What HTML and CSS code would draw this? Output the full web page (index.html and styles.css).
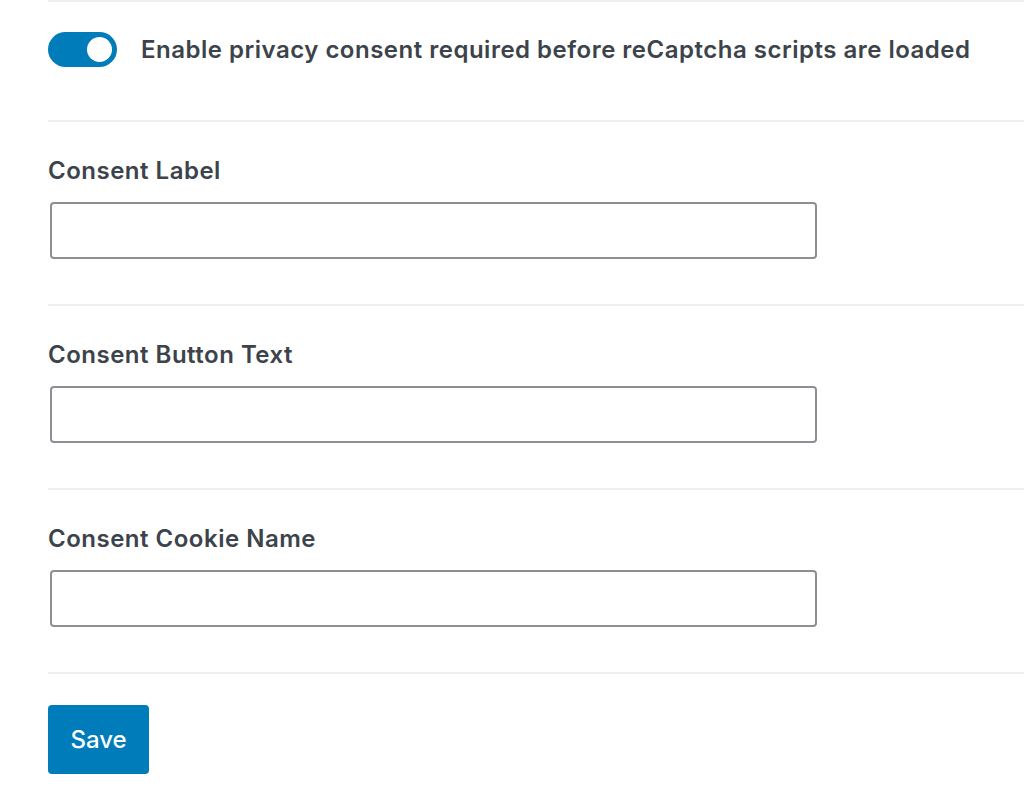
FILE: index.html
```html
<!DOCTYPE html>
<html>
<head>
<meta charset="utf-8">
<link rel="stylesheet" href="styles.css">
</head>
<body>
<div class="settings">
  <div class="row toggle-row">
    <span class="toggle"><span class="knob"></span></span>
    <span class="toggle-label">Enable privacy consent required before reCaptcha scripts are loaded</span>
  </div>
  <div class="row field-row">
    <label class="field-label">Consent Label</label>
    <input class="field-input" type="text">
  </div>
  <div class="row field-row">
    <label class="field-label">Consent Button Text</label>
    <input class="field-input" type="text">
  </div>
  <div class="row field-row">
    <label class="field-label">Consent Cookie Name</label>
    <input class="field-input" type="text">
  </div>
  <div class="row actions">
    <button class="save-btn">Save</button>
  </div>
</div>
</body>
</html>
```

FILE: styles.css
```css
html, body {
  margin: 0;
  padding: 0;
  background: #ffffff;
}
body {
  font-family: Inter, "Liberation Sans", Arial, sans-serif;
  color: #3c434a;
}
.settings {
  margin-left: 48px;
}
.row {
  border-top: 2px solid #f0f0f1;
}
.toggle-row {
  display: flex;
  align-items: center;
  gap: 24px;
  padding: 30px 0 53px;
}
.toggle {
  width: 69px;
  height: 35px;
  border-radius: 18px;
  background: #007cba;
  display: flex;
  align-items: center;
  justify-content: flex-end;
  padding-right: 5px;
  box-sizing: border-box;
  flex: none;
}
.knob {
  width: 25px;
  height: 25px;
  border-radius: 50%;
  background: #fff;
}
.toggle-label {
  font-size: 24px;
  font-weight: 600;
  line-height: 30px;
  letter-spacing: 0.5px;
}
.field-row {
  display: flex;
  flex-direction: column;
  align-items: flex-start;
  padding: 34px 0 45px;
}
.field-label {
  font-size: 24px;
  font-weight: 600;
  line-height: 30px;
  letter-spacing: 0.5px;
  margin-bottom: 16px;
}
.field-input {
  margin-left: 2px;
  width: 767px;
  height: 57px;
  box-sizing: border-box;
  border: 2px solid #8c8f94;
  border-radius: 4px;
  background: #fff;
  font-size: 20px;
}
.actions {
  padding: 31px 0 24px;
}
.save-btn {
  width: 101px;
  height: 69px;
  background: #007cba;
  color: #fff;
  border: none;
  border-radius: 4px;
  font-family: Inter, "Liberation Sans", Arial, sans-serif;
  font-size: 24px;
  font-weight: 500;
  padding: 0;
}
```
